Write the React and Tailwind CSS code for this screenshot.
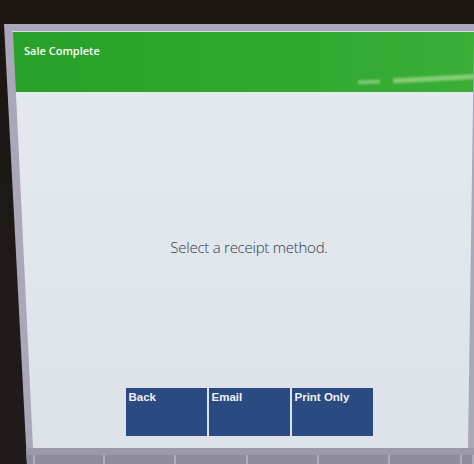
import React from "react";

export default function App() {
  const cells = [35, 70, 71, 72, 71, 71, 72, 12];
  return (
    <div className="w-[474px] h-[464px] overflow-hidden bg-gradient-to-b from-[#1c1613] to-[#211c1a] font-['Open_Sans',sans-serif]">
      <div className="mt-[24px] h-[440px] flex flex-col bg-[#aba7ba] pt-[7px] [clip-path:polygon(4px_0,100%_0,100%_100%,27px_100%)]">
        <div className="h-[1px] ml-[12px] bg-[#d9d8e2]" />
        <div className="ml-[13px] w-[461px] h-[416px] flex flex-col [clip-path:polygon(0_0,100%_0,calc(100%-6px)_100%,20px_100%)]">
          <div className="relative h-[60px] shrink-0 bg-gradient-to-r from-[#27a127] via-[#2ea82d] to-[#3aae37] pl-[11px] pt-[12px]">
            <div className="text-[11px] leading-[14px] font-semibold text-white">Sale Complete</div>
            <div className="absolute left-[345px] top-[48px] w-[22px] h-[4px] bg-[#9ed68a]/70 blur-[1px] -rotate-2" />
            <div className="absolute left-[380px] top-[44px] w-[90px] h-[5px] bg-[#a8da92]/70 blur-[1px] -rotate-3" />
          </div>
          <div className="flex-1 flex flex-col items-center pl-[11px] bg-gradient-to-b from-[#e3e9ef] via-[#e0e6eb] to-[#dce2e7]">
            <div className="mt-[145px] h-[20px] text-[15px] leading-[20px] font-light text-[#323c4a] tracking-[-0.25px]">
              Select a receipt method.
            </div>
            <div className="mt-[131px] flex gap-[2px]">
              {["Back", "Email", "Print Only"].map((l) => (
                <div
                  key={l}
                  className="w-[81px] h-[48px] bg-[#2a4a81] pl-[3px] pt-[2px] text-[11.5px] leading-[14px] font-bold text-[#eef1f6] font-['Liberation_Sans',Arial,sans-serif]"
                >
                  {l}
                </div>
              ))}
            </div>
          </div>
        </div>
        <div className="h-[7px] shrink-0 bg-[#9c99aa]" />
        <div className="flex-1 flex bg-[#8c8a9a]">
          {cells.map((w, i) => (
            <div key={i} className="h-full border-r-[2px] border-[#aeacba] bg-[#8e8c9c]" style={{ width: w }} />
          ))}
        </div>
      </div>
    </div>
  );
}
